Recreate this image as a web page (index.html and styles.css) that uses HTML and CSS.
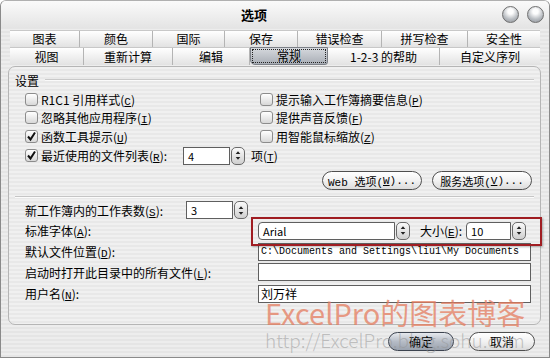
FILE: index.html
```html
<!DOCTYPE html>
<html lang="zh-CN">
<head>
  <meta charset="UTF-8">
  <title>选项</title>
  <link rel="stylesheet" href="styles.css">
</head>
<body>
  <div class="window">
    <div class="titlebar">
      <div class="title">选项</div>
      <div class="win-btns">
        <span class="orb"></span>
        <span class="orb"></span>
      </div>
    </div>

    <div class="tabs">
      <div class="tab-row row-top">
        <div class="tab">图表</div>
        <div class="tab">颜色</div>
        <div class="tab">国际</div>
        <div class="tab">保存</div>
        <div class="tab">错误检查</div>
        <div class="tab">拼写检查</div>
        <div class="tab">安全性</div>
      </div>
      <div class="tab-row row-bottom">
        <div class="tab">视图</div>
        <div class="tab">重新计算</div>
        <div class="tab">编辑</div>
        <div class="tab active"><span class="focus">常规</span></div>
        <div class="tab">1-2-3 的帮助</div>
        <div class="tab">自定义序列</div>
      </div>
    </div>

    <div class="panel">
      <div class="legend"><span>设置</span><div class="legend-line"></div></div>

      <div class="settings">
        <div class="check"><span class="box"></span><span>R1C1 引用样式(<u>C</u>)</span></div>
        <div class="check"><span class="box"></span><span>提示输入工作簿摘要信息(<u>P</u>)</span></div>
        <div class="check"><span class="box"></span><span>忽略其他应用程序(<u>I</u>)</span></div>
        <div class="check"><span class="box"></span><span>提供声音反馈(<u>F</u>)</span></div>
        <div class="check"><span class="box checked"><svg viewBox="0 0 13 13" width="13" height="13"><path d="M3 6.5 L5.5 9.5 L10 2.5" fill="none" stroke="#111" stroke-width="2"/></svg></span><span>函数工具提示(<u>U</u>)</span></div>
        <div class="check"><span class="box"></span><span>用智能鼠标缩放(<u>Z</u>)</span></div>
        <div class="check recent">
          <span class="box checked"><svg viewBox="0 0 13 13" width="13" height="13"><path d="M3 6.5 L5.5 9.5 L10 2.5" fill="none" stroke="#111" stroke-width="2"/></svg></span>
          <span class="recent-label">最近使用的文件列表(<u>R</u>):</span>
          <span class="spin"><span class="field">4</span><span class="spin-btn"><svg viewBox="0 0 13 17" width="13" height="17"><path d="M4 7 L6.5 4 L9 7 Z M4 10 L6.5 13 L9 10 Z" fill="#222"/></svg></span></span>
          <span class="unit">项(<u>T</u>)</span>
        </div>
      </div>

      <div class="btn-row">
        <span class="pill">Web 选项(<u>W</u>)...</span>
        <span class="pill">服务选项(<u>V</u>)...</span>
      </div>

      <div class="separator"></div>

      <div class="form">
        <div class="form-row">
          <span class="label">新工作簿内的工作表数(<u>S</u>):</span>
          <span class="spin sheets"><span class="field">3</span><span class="spin-btn"><svg viewBox="0 0 13 17" width="13" height="17"><path d="M4 7 L6.5 4 L9 7 Z M4 10 L6.5 13 L9 10 Z" fill="#222"/></svg></span></span>
        </div>
        <div class="form-row">
          <span class="label">标准字体(<u>A</u>):</span>
          <span class="combo font-combo"><span class="field">Arial</span><span class="spin-btn"><svg viewBox="0 0 13 17" width="13" height="17"><path d="M4 7 L6.5 4 L9 7 Z M4 10 L6.5 13 L9 10 Z" fill="#222"/></svg></span></span>
          <span class="size-label">大小(<u>E</u>):</span>
          <span class="combo size-combo"><span class="field">10</span><span class="spin-btn"><svg viewBox="0 0 13 17" width="13" height="17"><path d="M4 7 L6.5 4 L9 7 Z M4 10 L6.5 13 L9 10 Z" fill="#222"/></svg></span></span>
        </div>
        <div class="form-row">
          <span class="label">默认文件位置(<u>D</u>):</span>
          <span class="text-field path">C:\Documents and Settings\liu1\My Documents</span>
        </div>
        <div class="form-row">
          <span class="label">启动时打开此目录中的所有文件(<u>L</u>):</span>
          <span class="text-field"></span>
        </div>
        <div class="form-row">
          <span class="label">用户名(<u>N</u>):</span>
          <span class="text-field">刘万祥</span>
        </div>
      </div>
    </div>

    <div class="footer">
      <span class="pill default">确定</span>
      <span class="pill">取消</span>
    </div>

    <div class="highlight"></div>
    <div class="watermark">
      <div class="wm-title">ExcelPro的图表博客</div>
      <div class="wm-url">http://ExcelPro.blog.sohu.com</div>
    </div>
  </div>
</body>
</html>
```

FILE: styles.css
```css
body {
  margin: 0;
  font-family: "Liberation Mono", "Noto Sans CJK SC", monospace;
  font-size: 12px;
  color: #000;
}
u {
  text-decoration: underline;
}
.window {
  position: relative;
  width: 550px;
  height: 358px;
  box-sizing: border-box;
  border: 1px solid #8a8a8a;
  border-top-color: #b0b0b0;
  border-radius: 6px 6px 0 0;
  background: repeating-linear-gradient(#ededed 0 2px, #e5e5e5 2px 4px);
  display: flex;
  flex-direction: column;
  overflow: hidden;
}
.titlebar {
  height: 27px;
  flex-shrink: 0;
  display: flex;
  align-items: center;
  background: linear-gradient(#fafafa, #e4e4e4);
}
.title {
  flex: 1;
  text-align: center;
  padding-left: 8px;
  font-family: "Noto Sans CJK SC", sans-serif;
  font-weight: bold;
  font-size: 13px;
}
.win-btns {
  width: 50px;
  display: flex;
  justify-content: flex-end;
  gap: 8px;
  padding-right: 5px;
  box-sizing: border-box;
}
.orb {
  width: 17px;
  height: 17px;
  border-radius: 50%;
  box-sizing: border-box;
  border: 1px solid #6f6f6f;
  background: radial-gradient(circle at 50% 30%, #fdfdfd 0 20%, #b9bdc2 60%, #8c9096 100%);
}
.tabs {
  margin: 2px 9px 0 9px;
}
.tab-row {
  display: grid;
  height: 16px;
  background: linear-gradient(#ffffff, #e2e2e2);
  border-top: 1px solid #c8c8c8;
}
.row-top {
  grid-template-columns: 70px 73px 72px 73px 84px 86px 1fr;
}
.row-bottom {
  height: 17px;
  grid-template-columns: 74px 89px 77px 78px 112px 1fr;
}
.tab {
  display: flex;
  align-items: center;
  justify-content: center;
  font-family: "Noto Sans CJK SC", sans-serif;
  border-right: 1px solid #b4b4b4;
  line-height: 1;
}
.tab:last-child {
  border-right: none;
}
.tab.active {
  background: linear-gradient(#d6d9de, #a9aeb6);
  border: 1px solid #7b7f86;
  border-radius: 0 0 3px 5px;
  margin-top: -1px;
  padding: 1px;
}
.focus {
  flex: 1;
  align-self: stretch;
  display: flex;
  align-items: center;
  justify-content: center;
  border: 1px dotted #222;
}
.panel {
  margin: 1px 8px 0 7px;
  height: 259px;
  flex-shrink: 0;
  box-sizing: border-box;
  border: 1px solid #b5b5b5;
  border-radius: 7px;
  background: repeating-linear-gradient(#f0f0f0 0 2px, #e8e8e8 2px 4px);
  padding: 5px 6px 0 6px;
}
.legend {
  display: flex;
  align-items: center;
  gap: 6px;
  height: 16px;
  font-family: "Noto Sans CJK SC", sans-serif;
}
.legend-line {
  flex: 1;
  height: 1px;
  background: #c9c9c9;
  border-bottom: 1px solid #fafafa;
}
.settings {
  display: grid;
  grid-template-columns: 235px 1fr;
  grid-template-rows: 18px 19px 19px 19px;
  padding: 2px 0 0 10px;
}
.check {
  display: flex;
  align-items: center;
  gap: 3px;
  white-space: nowrap;
  font-family: "Noto Sans CJK SC", sans-serif;
}
.check u, .label u, .size-label u, .unit u {
  font-family: "Liberation Mono", monospace;
  font-size: 11px;
}
.box {
  width: 13px;
  height: 13px;
  flex-shrink: 0;
  box-sizing: border-box;
  border: 1px solid #8c8c8c;
  border-radius: 3px;
  background: linear-gradient(#ffffff, #d8d8d8);
  display: flex;
}
.box svg {
  margin: -1px;
}
.recent {
  grid-column: 1 / 3;
}
.recent-label {
  width: 139px;
}
.spin {
  display: flex;
  align-items: center;
  height: 18px;
  gap: 1px;
  flex-shrink: 0;
}
.field {
  height: 18px;
  box-sizing: border-box;
  border: 1px solid #5f5f5f;
  background: #fff;
  padding: 0 4px;
  display: flex;
  align-items: center;
  font-size: 11px;
}
.spin .field {
  width: 47px;
}
.spin-btn {
  width: 14px;
  height: 18px;
  flex-shrink: 0;
  box-sizing: border-box;
  border: 1px solid #6a6a6a;
  border-radius: 5px;
  background: linear-gradient(#fafafa, #cfcfcf);
  display: flex;
  align-items: center;
  justify-content: center;
}
.spin-btn svg {
  width: 12px;
}
.unit {
  margin-left: 3px;
}
.btn-row {
  display: flex;
  justify-content: flex-end;
  gap: 10px;
  padding-right: 2px;
  margin-top: 6px;
}
.pill {
  height: 19px;
  box-sizing: border-box;
  border: 1px solid #4f4f4f;
  border-radius: 10px;
  background: linear-gradient(#ffffff, #f2f2f2 50%, #dcdcdc);
  display: flex;
  align-items: center;
  justify-content: center;
  font-family: "Liberation Mono", "Noto Sans CJK SC", monospace;
  font-size: 11px;
  width: 100px;
  white-space: nowrap;
}
.separator {
  height: 1px;
  margin: 6px 0 0 0;
  background: #c5c5c5;
  border-bottom: 1px solid #fbfbfb;
}
.form {
  display: flex;
  flex-direction: column;
  padding: 2px 3px 0 10px;
}
.form-row {
  display: flex;
  align-items: center;
  height: 20px;
  white-space: nowrap;
  font-family: "Noto Sans CJK SC", sans-serif;
}
.form-row:nth-child(2), .form-row:nth-child(3) {
  height: 21px;
}
.form-row:last-child {
  height: 23px;
}
.label {
  width: 233px;
  flex-shrink: 0;
}
.sheets {
  margin-left: -72px;
}
.combo {
  display: flex;
  align-items: center;
  gap: 1px;
  flex-shrink: 0;
}
.combo .field {
  border-radius: 4px 0 0 4px;
}
.font-combo .field {
  width: 137px;
}
.size-combo .field {
  width: 45px;
}
.size-label {
  margin: 0 4px 0 10px;
  flex-shrink: 0;
}
.text-field {
  width: 274px;
  height: 18px;
  box-sizing: border-box;
  border: 1px solid #5f5f5f;
  background: #fff;
  padding: 0 2px;
  display: flex;
  align-items: center;
  font-size: 12px;
}
.path {
  font-family: "Liberation Mono", monospace;
  font-size: 10px;
}
.footer {
  display: flex;
  justify-content: flex-end;
  gap: 15px;
  padding: 7px 14px 0 0;
}
.footer .pill {
  width: 66px;
  font-family: "Noto Sans CJK SC", sans-serif;
  font-size: 12px;
}
.pill.default {
  border-color: #3d4450;
  background: linear-gradient(#e6e9ee, #b6bcc6 50%, #9aa2ae);
}
.highlight {
  position: absolute;
  left: 250px;
  top: 216px;
  width: 291px;
  height: 29px;
  box-sizing: border-box;
  border: 2px solid #a01d22;
  box-shadow: 1px 1px 2px rgba(0, 0, 0, 0.3);
}
.watermark {
  position: absolute;
  left: 264px;
  top: 294px;
  font-family: "Noto Sans CJK SC", sans-serif;
  pointer-events: none;
}
.wm-title {
  font-size: 29px;
  line-height: 34px;
  color: rgba(228, 125, 95, 0.75);
}
.wm-url {
  font-size: 19px;
  line-height: 22px;
  font-weight: 300;
  color: rgba(150, 150, 150, 0.55);
}
```
